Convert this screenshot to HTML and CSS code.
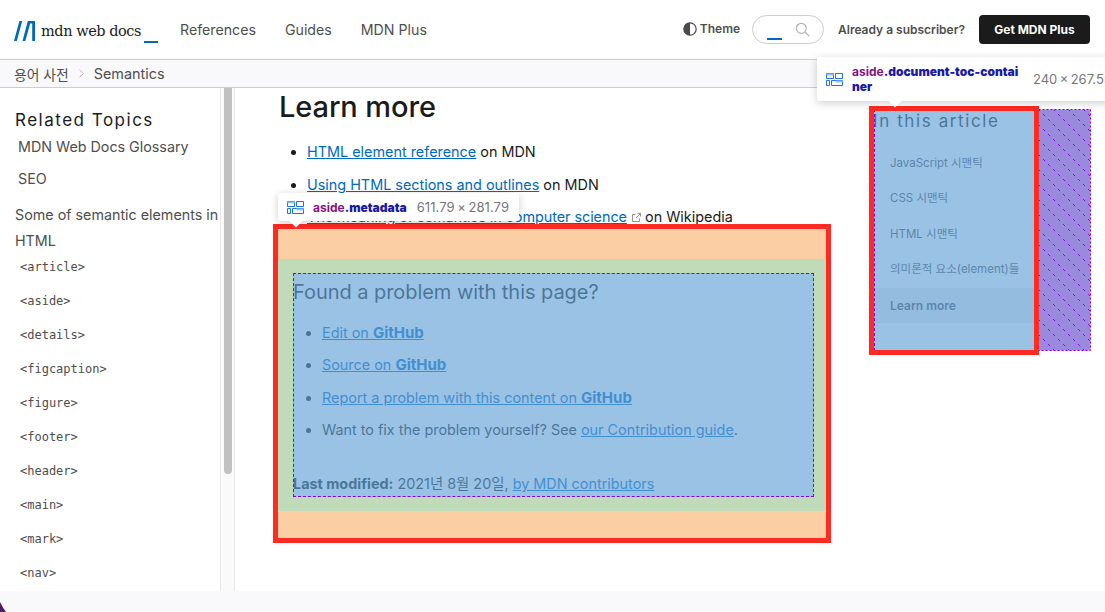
FILE: index.html
```html
<!DOCTYPE html>
<html lang="en">
<head>
<meta charset="utf-8">
<title>Semantics</title>
<link rel="stylesheet" href="styles.css">
</head>
<body>
<div class="page">
  <header class="topbar">
    <a class="logo">
      <svg class="logo-m" width="21" height="20" viewBox="0 0 21 20"><path d="M0 20 L5.4 0 H8.2 L2.8 20 Z M8.5 20 L13.8 0 H21 V20 H18.2 V2.6 H16.2 L11.3 20 Z" fill="#0069c2"/></svg>
      <span class="logo-text">mdn web docs</span><span class="logo-line"></span>
    </a>
    <nav class="mainnav"><a>References</a><a>Guides</a><a>MDN Plus</a></nav>
    <div class="tools">
      <span class="theme"><svg width="14" height="14" viewBox="0 0 14 14"><circle cx="7" cy="7" r="6.2" fill="none" stroke="#4a4a4a" stroke-width="1.2"/><path d="M7 .8a6.2 6.2 0 0 0 0 12.4Z" fill="#4a4a4a"/></svg>Theme</span>
      <div class="search"><span class="search-line"></span><svg width="15" height="15" viewBox="0 0 15 15"><circle cx="6.3" cy="6.3" r="5" fill="none" stroke="#b3b3b3" stroke-width="1.2"/><path d="M10 10l4.3 4.3" stroke="#b3b3b3" stroke-width="1.2"/></svg></div>
      <span class="already">Already a subscriber?</span>
      <a class="cta">Get MDN Plus</a>
    </div>
  </header>
  <div class="crumbs"><span>용어 사전</span><svg width="7" height="9" viewBox="0 0 7 9"><path d="M1.5 .8l4 3.7-4 3.7" fill="none" stroke="#b8b8b8"/></svg><span>Semantics</span></div>
  <div class="body">
    <aside class="sidebar">
      <h4 class="side-title">Related Topics</h4>
      <p class="side-link">MDN Web Docs Glossary</p>
      <p class="side-link seo">SEO</p>
      <p class="side-group">Some of semantic elements in HTML</p>
      <ul class="tags">
        <li>&lt;article&gt;</li><li>&lt;aside&gt;</li><li>&lt;details&gt;</li><li>&lt;figcaption&gt;</li><li>&lt;figure&gt;</li><li>&lt;footer&gt;</li><li>&lt;header&gt;</li><li>&lt;main&gt;</li><li>&lt;mark&gt;</li><li>&lt;nav&gt;</li>
      </ul>
    </aside>
    <div class="scrolltrack"><span class="scrollthumb"></span></div>
    <main class="content">
      <h2 class="learn">Learn more</h2>
      <ul class="links">
        <li><a>HTML element reference</a> on MDN</li>
        <li><a>Using HTML sections and outlines</a> on MDN</li>
        <li><a class="tight">The meaning of semantics in computer science</a> <svg class="ext" width="9" height="9" viewBox="0 0 9 9"><path d="M7.5 5.5v3h-7v-7h3M4 5l4.5-4.5M5.5.5h3v3" fill="none" stroke="#777" stroke-width=".8"/></svg> on Wikipedia</li>
      </ul>
      <aside class="metadata">
        <h3 class="found">Found a problem with this page?</h3>
        <ul class="meta-list">
          <li><a>Edit on <b>GitHub</b></a></li>
          <li><a>Source on <b>GitHub</b></a></li>
          <li><a>Report a problem with this content on <b>GitHub</b></a></li>
          <li>Want to fix the problem yourself? See <a>our Contribution guide</a>.</li>
        </ul>
        <p class="modified"><b>Last modified:</b> 2021년 8월 20일, <a>by MDN contributors</a></p>
      </aside>
    </main>
    <aside class="toc">
      <h4 class="toc-title">In this article</h4>
      <ul class="toc-list">
        <li>JavaScript 시맨틱</li><li>CSS 시맨틱</li><li>HTML 시맨틱</li><li>의미론적 요소(element)들</li><li class="current">Learn more</li>
      </ul>
    </aside>
  </div>
  <div class="footer-strip"></div>
  <svg class="corner" width="7" height="10" viewBox="0 0 7 10"><path d="M0 0 Q3 6 6 10 H0 Z" fill="#4b1f5e"/></svg>

  <div class="hl-margin"></div>
  <div class="hl-padding"></div>
  <div class="hl-box"></div>
  <svg class="toc-gap" width="53" height="242" viewBox="0 0 53 242">
    <defs><pattern id="hatch" width="15" height="15" patternUnits="userSpaceOnUse"><rect width="15" height="15" fill="#9a8ade"/><path d="M0 0L15 15" stroke="#8a00e0" stroke-width=".9" stroke-dasharray="3 4.07"/></pattern></defs>
    <rect x=".5" y=".5" width="52" height="241" fill="url(#hatch)" stroke="#8a00e0" stroke-dasharray="2 2"/>
  </svg>
  <div class="toc-box"></div>
  <div class="frame frame-meta"></div>
  <div class="frame frame-toc"></div>

  <div class="tip tip-meta">
    <svg class="tip-icon" width="17" height="13" viewBox="0 0 17 13"><path d="M.5.5h7v5h-7zM9.5 .5h7v5h-7zM.5 7.5h3v5h-3zM5.5 7.5h11v5h-11z" fill="none" stroke="#1a73e8"/><path d="M.5 .5h7v2h-7zM9.5 7.5h7v2h-7z" fill="#9cc3f5"/></svg>
    <span class="tip-name"><i>aside</i><b>.metadata</b></span>
    <span class="tip-size">611.79&thinsp;×&thinsp;281.79</span>
  </div>
  <div class="tip tip-toc">
    <svg class="tip-icon" width="17" height="13" viewBox="0 0 17 13"><path d="M.5.5h7v5h-7zM9.5 .5h7v5h-7zM.5 7.5h3v5h-3zM5.5 7.5h11v5h-11z" fill="none" stroke="#1a73e8"/><path d="M.5 .5h7v2h-7zM9.5 7.5h7v2h-7z" fill="#9cc3f5"/></svg>
    <span class="tip-name wrap"><i>aside</i><b>.document-toc-container</b></span>
    <span class="tip-size">240&thinsp;×&thinsp;267.55</span>
  </div>
</div>
</body>
</html>
```
FILE: styles.css
```css
* { box-sizing: border-box; }
html, body { margin: 0; padding: 0; }
body { width: 1105px; height: 612px; overflow: hidden; background: #fff; font-family: Inter, "Noto Sans CJK KR", sans-serif; color: #1b1b1b; }
.page { position: relative; width: 1105px; height: 612px; overflow: hidden; display: flex; flex-direction: column; }
a { color: #0069c2; text-decoration: underline; }

.topbar { height: 59px; flex: none; display: flex; align-items: center; padding: 0 15px 0 14px; background: #fff; }
.logo { display: flex; align-items: center; text-decoration: none; color: #1b1b1b; width: 166px; position: relative; }
.logo-m { flex: none; margin-top: 2px; }
.logo-text { font-family: "DejaVu Serif", serif; font-size: 14.5px; margin-left: 6px; letter-spacing: -.45px; white-space: nowrap; margin-top: 2px; }
.logo-line { position: absolute; left: 130px; top: 22px; width: 14px; height: 2px; background: #0069c2; }
.mainnav { display: flex; gap: 29px; font-size: 14.2px; color: #4e4e4e; margin-top: -1px; }
.mainnav a { color: #4e4e4e; text-decoration: none; }
.tools { margin-left: auto; display: flex; align-items: center; font-size: 12px; font-weight: 500; color: #4e4e4e; }
.theme { display: flex; align-items: center; gap: 3px; margin-right: 12px; font-weight: 600; margin-top: -2px; }
.search { width: 72px; height: 29px; border: 1px solid #cdcdcd; border-radius: 15px; margin-right: 14px; display: flex; align-items: center; position: relative; padding-left: 42px; }
.search-line { position: absolute; left: 14px; top: 22px; width: 15px; height: 2px; background: #0069c2; }
.already { margin-right: 14px; font-size: 12px; font-weight: 600; }
.cta { width: 111px; height: 29px; background: #1b1b1b; color: #fff; border-radius: 4px; display: flex; align-items: center; justify-content: center; font-size: 12px; font-weight: 700; text-decoration: none; }

.crumbs { height: 29px; flex: none; background: #f9f9fb; border-top: 1px solid #cdcdcd; border-bottom: 1px solid #cdcdcd; display: flex; align-items: center; gap: 9px; padding-left: 14px; font-size: 14.4px; color: #4e4e4e; }
.crumbs span:first-child { font-size: 13.8px; }

.body { flex: 1; display: flex; min-height: 0; }
.sidebar { width: 220px; flex: none; padding: 22px 0 0 15px; font-size: 14.3px; color: #4e4e4e; overflow: hidden; }
.side-title { margin: 0 0 6px; font-size: 17px; font-weight: 400; letter-spacing: 1.5px; line-height: 20px; color: #1b1b1b; }
.side-link { margin: 0 0 10px 3px; line-height: 22px; }
.side-link.seo { margin-bottom: 11px; }
.side-group { margin: 0; line-height: 26px; padding-top: 1px; }
.tags { list-style: none; margin: -4px 0 0; padding: 0 0 0 5px; font-family: "DejaVu Sans Mono", monospace; font-size: 12px; line-height: 34px; color: #4e4e4e; }

.scrolltrack { width: 15px; flex: none; background: #fafafa; border-left: 1px solid #e8e8e8; border-right: 1px solid #e8e8e8; padding: 0 3px; }
.scrollthumb { display: block; width: 8px; height: 386px; background: #c1c1c1; border-radius: 0 0 4px 4px; }

.content { width: 638px; flex: none; padding: 2px 0 0 44px; font-size: 14.4px; position: relative; }
.learn { margin: 0; font-size: 29px; font-weight: 500; line-height: 34px; letter-spacing: -.1px; }
.links { margin: 18px 0 0; padding-left: 28px; line-height: 20px; }
.links li { margin-bottom: 12.5px; }
.tight { letter-spacing: -.05px; }
.ext { vertical-align: 0; margin-left: 1px; }
.metadata { width: 520px; margin: 48px 0 0 14px; }
.found { margin: 0; padding-top: 3px; font-size: 20px; font-weight: 400; line-height: 28px; letter-spacing: -.05px; }
.meta-list { margin: 17px 0 0; padding-left: 29px; line-height: 20px; }
.meta-list li { margin-bottom: 12.4px; }
.meta-list b { font-size: 15px; }
.modified { margin: 34px 0 0; line-height: 20px; }
.modified b { font-weight: 700; }

.toc { flex: 1; padding: 23px 0 0 0; font-size: 12px; color: #4e4e4e; min-width: 0; }
.toc-title { margin: 0 0 14.5px; font-size: 17px; font-weight: 400; line-height: 20px; letter-spacing: 1.6px; color: #1b1b1b; white-space: nowrap; }
.toc-list { list-style: none; margin: 0; padding: 0; width: 165px; font-size: 11.5px; }
.toc-list li { height: 35.5px; line-height: 35.5px; padding-left: 17px; white-space: nowrap; }
.toc-list .current { background: #eee; font-weight: 600; font-size: 12px; }

.footer-strip { height: 21px; flex: none; background: #f9f9fb; }
.corner { position: absolute; left: 0; bottom: 0; }

/* devtools highlight overlays */
.hl-margin { position: absolute; left: 278px; top: 228px; width: 548px; height: 310px; border-top: 31px solid rgba(250,181,115,.66); border-bottom: 27px solid rgba(250,181,115,.66); }
.hl-padding { position: absolute; left: 278px; top: 259px; width: 548px; height: 252px; border-style: solid; border-color: rgba(140,190,126,.55); border-width: 14px 12px 14px 15px; }
.hl-box { position: absolute; left: 293px; top: 273px; width: 521px; height: 224px; background: rgba(100,162,216,.66); border: 1px dashed #8a00e0; }
.toc-box { position: absolute; left: 874px; top: 109px; width: 164px; height: 242px; background: rgba(100,162,216,.66); border: 1px dashed #8a00e0; border-right: 0; }
.toc-gap { position: absolute; left: 1038px; top: 109px; }
.frame { position: absolute; border: 5px solid #ff2a22; pointer-events: none; }
.frame-meta { left: 273px; top: 224px; width: 558px; height: 319px; }
.frame-toc { left: 869px; top: 106px; width: 170px; height: 249px; }

.tip { position: absolute; background: #fff; border-radius: 3px; box-shadow: 0 2px 8px rgba(0,0,0,.2); display: flex; align-items: center; font-size: 12px; white-space: nowrap; }
.tip::after { content: ""; position: absolute; width: 12px; height: 12px; background: #fff; transform: rotate(45deg); }
.tip-meta { left: 278px; top: 193px; width: 241px; height: 28px; padding-left: 9px; gap: 9px; }
.tip-meta::after { left: 12px; bottom: -4px; }
.tip-meta .tip-size { margin-left: 1px; letter-spacing: .1px; }
.tip-toc { left: 817px; top: 57px; width: 300px; height: 44px; padding-left: 9px; gap: 9px; }
.tip-toc::after { left: 72px; bottom: -4px; }
.tip-icon { flex: none; position: relative; z-index: 1; }
.tip-name { position: relative; z-index: 1; font-weight: 700; }
.tip-name i { font-style: normal; color: #881280; }
.tip-name b { color: #1a1aa6; }
.tip-name.wrap { width: 172px; white-space: normal; word-break: break-all; line-height: 15.5px; }
.tip-size { color: #777; position: relative; z-index: 1; font-size: 13px; }
```
